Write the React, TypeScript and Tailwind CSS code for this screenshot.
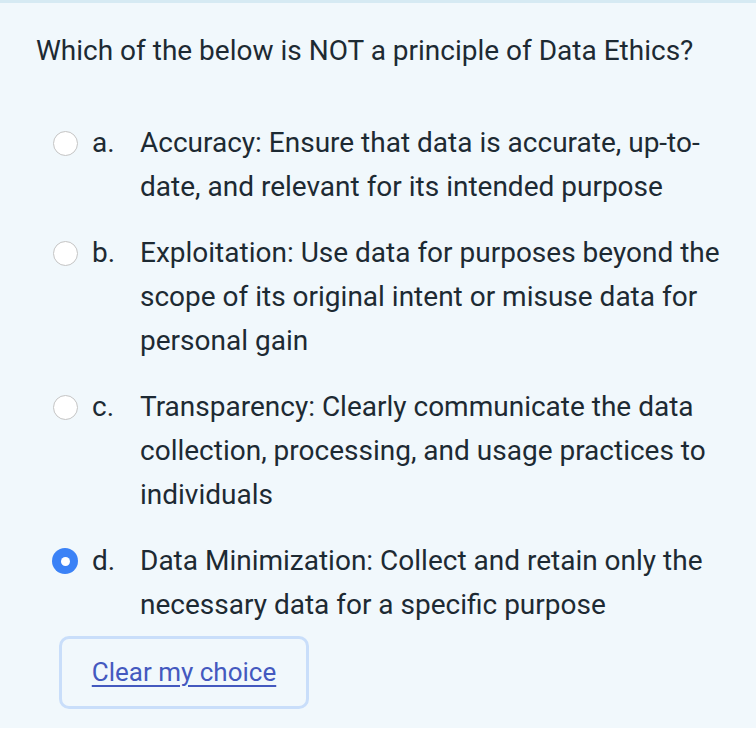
import React from "react";

const options = [
  { key: "a.", text: "Accuracy: Ensure that data is accurate, up-to-date, and relevant for its intended purpose", checked: false },
  { key: "b.", text: "Exploitation: Use data for purposes beyond the scope of its original intent or misuse data for personal gain", checked: false },
  { key: "c.", text: "Transparency: Clearly communicate the data collection, processing, and usage practices to individuals", checked: false },
  { key: "d.", text: "Data Minimization: Collect and retain only the necessary data for a specific purpose", checked: true },
];

function Radio({ checked }: { checked: boolean }) {
  if (checked) {
    return (
      <div className="w-[26px] h-[26px] rounded-full bg-[#3b82f6] flex items-center justify-center">
        <div className="w-[9px] h-[9px] rounded-full bg-white" />
      </div>
    );
  }
  return <div className="w-[25px] h-[25px] rounded-full bg-white border border-[#c4c4c4]" />;
}

export default function App() {
  return (
    <div className="w-[756px] h-[730px] bg-white" style={{ fontFamily: "Roboto, 'Liberation Sans', sans-serif" }}>
      <div className="h-[728px] bg-[#f1f8fc] border-t-[3px] border-[#d6eaf3] px-[36px] pt-[26px] text-[#1d2a33]">
        <div className="text-[28px] leading-[44px]">Which of the below is NOT a principle of Data Ethics?</div>
        <div className="mt-[48px] flex flex-col gap-[22px]">
          {options.map((o) => (
            <div key={o.key} className="flex items-start text-[28px] leading-[44px]">
              <div className="w-[56px] h-[44px] flex items-center justify-center pl-[2px]">
                <Radio checked={o.checked} />
              </div>
              <div className="w-[48px]">{o.key}</div>
              <div className="flex-1">{o.text}</div>
            </div>
          ))}
        </div>
        <div className="mt-[9px] ml-[23px] w-[250px] h-[73px] rounded-[10px] border-[3px] border-[#c9defa] flex items-center justify-center">
          <span className="text-[26px] text-[#4459bf] underline underline-offset-[4px] decoration-[2px]">Clear my choice</span>
        </div>
      </div>
    </div>
  );
}
